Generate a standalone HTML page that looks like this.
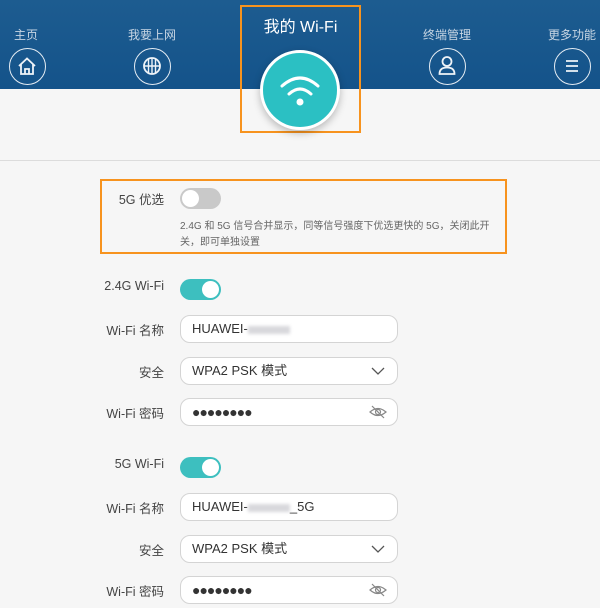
<!DOCTYPE html>
<html><head><meta charset="utf-8"><style>
*{margin:0;padding:0;box-sizing:border-box}
body{width:600px;height:608px;overflow:hidden;background:#f6f6f6;font-family:"Liberation Sans","Noto Sans CJK SC",sans-serif;position:relative;color:#333}
.hdr{position:absolute;left:0;top:0;width:600px;height:89px;background:linear-gradient(#1d5c90,#14538a)}
.nav{position:absolute;color:#c8d6e4;font-size:12px;text-align:center}
.ic{position:absolute;width:37px;height:37px;border:1.6px solid #e4ecf3;border-radius:50%}
.ab{position:absolute}
.line{position:absolute;left:0;top:160px;width:600px;height:1px;background:#dcdcdc}
.lbl{position:absolute;right:436px;font-size:12.5px;color:#444;text-align:right;white-space:nowrap}
.tg{position:absolute;left:180px;width:41px;height:21px;border-radius:11px}
.tg i{position:absolute;top:2px;width:17px;height:17px;border-radius:50%;background:#fff}
.inp{position:absolute;left:180px;width:218px;height:28px;border:1px solid #d4d4d4;border-radius:10px;background:#fff;font-size:13px;line-height:26px;padding-left:11px;color:#333}
.blur{display:inline-block;width:42px;height:8px;background:#d8d8dc;vertical-align:middle;filter:blur(1.5px)}
</style></head><body>
<div class="hdr"></div>
<div class="nav" style="left:14px;top:26px">主页</div>
<div class="nav" style="left:128px;top:26px">我要上网</div>
<div class="nav" style="left:423px;top:26px">终端管理</div>
<div class="nav" style="left:548px;top:26px">更多功能</div>
<div class="ic" style="left:9px;top:48px"><svg width="34" height="34" viewBox="0 0 34 34"><path d="M9 17 L17 9.5 L25 17 M11 15.5 V25 H23 V15.5 M15 25 V20 H19 V25" fill="none" stroke="#eef3f8" stroke-width="1.8"/></svg></div>
<div class="ic" style="left:134px;top:48px"><svg width="34" height="34" viewBox="0 0 34 34"><circle cx="17" cy="17" r="8" fill="none" stroke="#eef3f8" stroke-width="1.8"/><path d="M17 9V25M9 17H25M13.5 10.5v13M20.5 10.5v13" stroke="#eef3f8" stroke-width="1.4"/></svg></div>
<div class="ic" style="left:429px;top:48px"><svg width="34" height="34" viewBox="0 0 34 34"><circle cx="17" cy="12.5" r="4.5" fill="none" stroke="#eef3f8" stroke-width="1.8"/><path d="M9.5 25 Q9.5 18.5 17 18.5 Q24.5 18.5 24.5 25 Z" fill="none" stroke="#eef3f8" stroke-width="1.8"/></svg></div>
<div class="ic" style="left:554px;top:48px"><svg width="34" height="34" viewBox="0 0 34 34"><path d="M11 12H23M11 17H23M11 22H23" stroke="#eef3f8" stroke-width="1.8"/></svg></div>
<div class="ab" style="left:240px;top:5px;width:121px;height:128px;border:2px solid #f7931e"></div>
<div class="ab" style="left:240px;top:13px;width:121px;text-align:center;color:#fff;font-size:16px">我的 Wi-Fi</div>
<div class="line"></div>
<div class="ab" style="left:260px;top:50px;width:80px;height:80px;border-radius:50%;background:#2bc0c3;border:3px solid #fff;box-shadow:0 3px 8px rgba(0,0,0,.25)"><svg width="74" height="74" viewBox="0 0 74 74"><path d="M19 33 Q37 17 55 33" fill="none" stroke="#fff" stroke-width="3" stroke-linecap="round"/><path d="M26 41 Q37 31 48 41" fill="none" stroke="#fff" stroke-width="3" stroke-linecap="round"/><circle cx="37" cy="49" r="3.5" fill="#fff"/></svg></div>
<div class="ab" style="left:100px;top:179px;width:407px;height:75px;border:2px solid #f7931e"></div>
<div class="lbl" style="top:189px">5G 优选</div>
<div class="tg" style="top:188px;background:#c9c9c9"><i style="left:2px"></i></div>
<div class="ab" style="left:180px;top:219px;width:325px;font-size:10px;line-height:16px;color:#666">2.4G 和 5G 信号合并显示，同等信号强度下优选更快的 5G，关闭此开关，即可单独设置</div>
<div class="lbl" style="top:279px">2.4G Wi-Fi</div>
<div class="tg" style="top:279px;background:#3dbfbf"><i style="right:2px"></i></div>
<div class="lbl" style="top:320px">Wi-Fi 名称</div>
<div class="inp" style="top:315px">HUAWEI-<span class="blur"></span></div>
<div class="lbl" style="top:362px">安全</div>
<div class="inp" style="top:357px">WPA2 PSK 模式<svg style="position:absolute;right:12px;top:9px" width="14" height="9"><path d="M1 1L7 7L13 1" fill="none" stroke="#555" stroke-width="1.3"/></svg></div>
<div class="lbl" style="top:403px">Wi-Fi 密码</div>
<div class="inp" style="top:398px;font-size:14px;letter-spacing:-1px">●●●●●●●●<svg style="position:absolute;right:10px;top:6px" width="18" height="14"><path d="M1 7Q9 0 17 7Q9 14 1 7Z" fill="none" stroke="#888" stroke-width="1.2"/><circle cx="9" cy="7" r="2.5" fill="none" stroke="#888" stroke-width="1.2"/><path d="M3 1L15 13" stroke="#888" stroke-width="1.2"/></svg></div>
<div class="lbl" style="top:457px">5G Wi-Fi</div>
<div class="tg" style="top:457px;background:#3dbfbf"><i style="right:2px"></i></div>
<div class="lbl" style="top:498px">Wi-Fi 名称</div>
<div class="inp" style="top:493px">HUAWEI-<span class="blur"></span>_5G</div>
<div class="lbl" style="top:540px">安全</div>
<div class="inp" style="top:535px">WPA2 PSK 模式<svg style="position:absolute;right:12px;top:9px" width="14" height="9"><path d="M1 1L7 7L13 1" fill="none" stroke="#555" stroke-width="1.3"/></svg></div>
<div class="lbl" style="top:581px">Wi-Fi 密码</div>
<div class="inp" style="top:576px;font-size:14px;letter-spacing:-1px">●●●●●●●●<svg style="position:absolute;right:10px;top:6px" width="18" height="14"><path d="M1 7Q9 0 17 7Q9 14 1 7Z" fill="none" stroke="#888" stroke-width="1.2"/><circle cx="9" cy="7" r="2.5" fill="none" stroke="#888" stroke-width="1.2"/><path d="M3 1L15 13" stroke="#888" stroke-width="1.2"/></svg></div>
</body></html>
